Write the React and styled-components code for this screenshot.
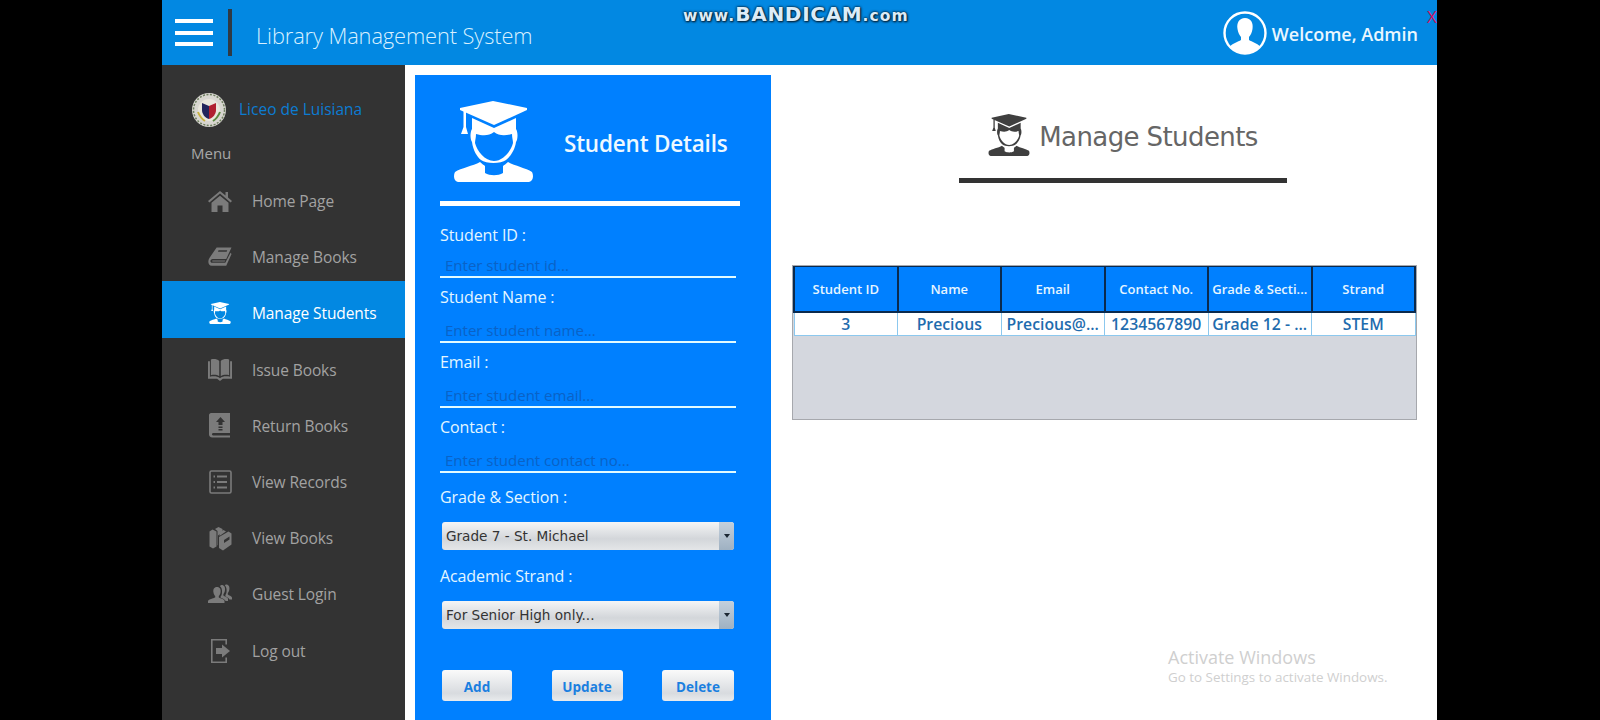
import styled, { createGlobalStyle } from "styled-components";

const GlobalStyle = createGlobalStyle`
  html, body {
    margin: 0;
    padding: 0;
    width: 1600px;
    height: 720px;
    overflow: hidden;
    background: #000;
  }
  * { box-sizing: border-box; }
`;

const uiFont = `"Open Sans", "Noto Sans", sans-serif`;

const Screen = styled.div`
  width: 1600px;
  height: 720px;
  padding-left: 162px;
  background: #000;
  font-family: ${uiFont};
`;

const AppWindow = styled.div`
  position: relative;
  width: 1275px;
  height: 720px;
  display: flex;
  flex-direction: column;
  overflow: hidden;
  background: #fff;
`;

const Header = styled.header`
  height: 65px;
  flex: none;
  display: flex;
  align-items: center;
  background: #0288e2;
  color: #d9f0ff;
`;

const Burger = styled.div`
  width: 38px;
  margin-left: 13px;
  display: flex;
  flex-direction: column;
  gap: 7.5px;
  span {
    display: block;
    height: 4px;
    background: #fff;
  }
`;

const HeaderRule = styled.div`
  width: 4px;
  height: 47px;
  margin-left: 15px;
  background: #2f3a45;
`;

const AppTitle = styled.h1`
  margin: 5px 0 0 24px;
  font-size: 21.8px;
  font-weight: 300;
  letter-spacing: -0.1px;
`;

const Welcome = styled.div`
  margin: 1px 19px 0 auto;
  display: flex;
  align-items: center;
  gap: 5px;
  font-size: 18px;
  font-weight: 600;
  color: #eaf7ff;
  span {
    margin-top: 2px;
  }
`;

const CloseMark = styled.span`
  position: absolute;
  top: 5px;
  left: 1265px;
  font-size: 17px;
  color: #d0125f;
`;

const Watermark = styled.div`
  position: absolute;
  top: 2px;
  left: 521px;
  font-family: "DejaVu Sans", sans-serif;
  font-weight: 700;
  font-size: 15.5px;
  letter-spacing: 1.1px;
  color: #dcecf7;
  text-shadow: 0 0 2px #06263f, 0 0 3px #06263f, 1px 1px 2px #06263f;
  b {
    font-size: 20px;
    letter-spacing: 0.7px;
  }
`;

const Body = styled.div`
  flex: 1;
  min-height: 0;
  display: flex;
`;

const Sidebar = styled.aside`
  width: 243px;
  flex: none;
  padding-top: 28px;
  background: #333;
`;

const Brand = styled.div`
  display: flex;
  align-items: center;
  gap: 13px;
  height: 34px;
  padding-left: 30px;
  font-size: 15.5px;
  line-height: 32px;
  color: #0c7cd2;
  span {
    margin-top: -2px;
  }
`;

const MenuLabel = styled.div`
  margin: 14px 0 0 29px;
  height: 24px;
  line-height: 24px;
  font-size: 15px;
  color: #a8a8a8;
`;

const Nav = styled.nav`
  margin-top: 4px;
`;

const NavRow = styled.div`
  height: 56.2px;
  display: flex;
  align-items: center;
  gap: 20px;
  padding: 8px 0 0 46px;
  font-size: 15.5px;
  letter-spacing: -0.1px;
  background: ${(p) => (p.$active ? "#0288e2" : "transparent")};
  color: ${(p) => (p.$active ? "#fff" : "#a2a2a2")};
  svg {
    color: ${(p) => (p.$active ? "#fff" : "#7b7b7b")};
  }
`;

const NavIcon = styled.span`
  width: 24px;
  height: 24px;
  flex: none;
  display: flex;
  align-items: center;
  justify-content: center;
`;

const DetailsPanel = styled.section`
  width: 356px;
  flex: none;
  margin: 10px 0 0 10px;
  padding: 26px 35px 0 25px;
  background: #0080ff;
  color: #e4f6ff;
`;

const PanelTop = styled.div`
  display: flex;
  align-items: center;
  padding-left: 13px;
  height: 81px;
  color: #fff;
`;

const PanelTitle = styled.h2`
  margin: 4px 0 0 30px;
  font-size: 22.5px;
  font-weight: 600;
  color: #eef9ff;
  letter-spacing: -0.2px;
`;

const PanelRule = styled.div`
  height: 5px;
  margin: 19px -4px 0 0;
  background: #fff;
`;

const Field = styled.div`
  height: ${(p) => (p.$first ? "72px" : "65px")};
  display: flex;
  flex-direction: column;
  justify-content: flex-end;
`;

const FieldLabel = styled.label`
  display: block;
  height: 24px;
  line-height: 24px;
  font-size: 16px;
  letter-spacing: -0.1px;
`;

const TextInput = styled.input`
  display: block;
  width: 296px;
  height: 33px;
  margin-top: ${(p) => (p.$first ? "-2px" : "1px")};
  padding: 8px 5px 0;
  border: 0;
  border-bottom: 2px solid #e2fbff;
  background: transparent;
  outline: none;
  font-family: ${uiFont};
  font-size: 15px;
  &::placeholder {
    color: #0a62c6;
    opacity: 1;
  }
`;

const ComboLabel = styled(FieldLabel)`
  margin-top: ${(p) => p.$top}px;
`;

const Combo = styled.div`
  width: 292px;
  height: 28px;
  margin: 13px 0 0 2px;
  display: flex;
  border-radius: 3px;
  overflow: hidden;
  background: linear-gradient(#f4f5f6, #d3d6da 60%, #e4e6e8);
  color: #333;
  font-family: "DejaVu Sans", sans-serif;
  font-size: 13.6px;
  line-height: 28px;
`;

const ComboText = styled.span`
  flex: 1;
  padding-left: 4px;
`;

const ComboArrow = styled.span`
  width: 15px;
  display: flex;
  align-items: center;
  justify-content: center;
  background: linear-gradient(#c4d0dc, #9fb1c2);
  &::after {
    content: "";
    border-left: 3px solid transparent;
    border-right: 3px solid transparent;
    border-top: 4px solid #1b2733;
  }
`;

const ButtonRow = styled.div`
  width: 292px;
  margin: 41px 0 0 2px;
  display: flex;
  justify-content: space-between;
`;

const ActionButton = styled.button`
  width: ${(p) => p.$width}px;
  height: 31px;
  padding: 3px 0 0;
  border: 0;
  border-radius: 3px;
  background: linear-gradient(#fafafa, #d8dbdf 75%, #e9ebed);
  color: #1a7fe0;
  font-family: ${uiFont};
  font-size: 13.5px;
  font-weight: 700;
`;

const Main = styled.main`
  flex: 1;
  min-width: 0;
  padding: 0 20px 0 21px;
`;

const Heading = styled.div`
  width: 328px;
  height: 118px;
  margin-left: 167px;
  padding-top: 49px;
  border-bottom: 5px solid #333;
  display: flex;
  justify-content: center;
  color: #3f3f3f;
`;

const HeadingText = styled.h2`
  margin: 0 0 0 9px;
  font-family: "DejaVu Sans", sans-serif;
  font-size: 26px;
  line-height: 46px;
  font-weight: 400;
  letter-spacing: -0.6px;
  color: #666;
  white-space: nowrap;
`;

const TableBox = styled.div`
  width: 625px;
  height: 155px;
  margin-top: 82px;
  background: #d4d7de;
  border: 1px solid #a6a8ad;
`;

const Grid = styled.table`
  width: 100%;
  table-layout: fixed;
  border-collapse: collapse;
`;

const HeadCell = styled.th`
  height: 45px;
  padding: 0 2px;
  background: #0080ff;
  border: 2px solid #0a2a4e;
  border-top-width: 1px;
  color: #e6f5ff;
  font-size: 13px;
  font-weight: 600;
  white-space: nowrap;
  overflow: hidden;
`;

const Cell = styled.td`
  height: 24px;
  padding: 0;
  background: #fff;
  border: 1px solid #8cc8ee;
  color: #1f6cae;
  font-size: 15.8px;
  font-weight: 600;
  text-align: center;
  white-space: nowrap;
  overflow: hidden;
`;

const Activate = styled.div`
  position: absolute;
  left: 1006px;
  top: 645px;
  color: #cfcfcf;
  font-size: 13.4px;
  line-height: 16px;
  strong {
    display: block;
    font-size: 18px;
    font-weight: 400;
    line-height: 24px;
  }
`;

const Student = ({ size }) => (
  <svg width={size} height={size} viewBox="0 0 81 81" fill="currentColor">
    <path d="M40 0 L74 7 V9 L41 24 L7 9 V7 Z" />
    <path d="M10.5 10 H13 V26 L15 33 H8 L10.5 26 Z" />
    <path
      fillRule="evenodd"
      d="M19 17 L41 27 L63 17 V28 C65 31 65 38 63 41 C62 49 57 56 53 59 C48 63 33 63 28 59 C24 56 20 49 19 41 C17 38 17 31 19 28 Z M23 33 C30 35 36 35 41 31 C46 35 52 35 59 33 C59 37 60 39 60 42 C58 50 50 60 41 60 C32 60 24 50 22 42 C22 39 23 37 23 33 Z"
    />
    <path d="M27 61 C29 63 31 64 32 65 V72 C37 75 45 75 50 72 V65 C51 64 53 63 55 61 C62 65 73 67 79 71 C81 75 80 80 76 81 H5 C1 80 0 75 2 71 C8 67 20 65 27 61 Z" />
  </svg>
);

const Seal = () => (
  <svg width="34" height="34" viewBox="0 0 34 34">
    <circle cx="17" cy="17" r="17" fill="#d8d6d0" />
    <circle cx="17" cy="17" r="15.5" fill="none" stroke="#6f7f60" strokeWidth="1.5" strokeDasharray="2 1.5" />
    <circle cx="17" cy="17" r="11" fill="#e9e6dc" />
    <path d="M10 10 L17 13 V26 C13 25 10 21 10 17 Z" fill="#22245c" />
    <path d="M24 10 L17 13 V26 C21 25 24 21 24 17 Z" fill="#b02030" />
    <path d="M6 19 C8 24 10 26 13 28" fill="none" stroke="#c8b040" strokeWidth="2" />
    <path d="M28 19 C26 24 24 26 21 28" fill="none" stroke="#5a8a40" strokeWidth="2" />
  </svg>
);

const Home = () => (
  <svg width="24" height="22" viewBox="0 0 24 22" fill="currentColor">
    <path d="M12 1 L17.5 5.5 V2 H20 V7.6 L24 11 L22.6 12.4 L12 3.6 L1.4 12.4 L0 11 Z" />
    <path d="M3.5 12.8 L12 5.8 L20.5 12.8 V22 H14.5 V15.5 H9.5 V22 H3.5 Z" />
  </svg>
);

const TiltedBook = () => (
  <svg width="25" height="22" viewBox="0 0 25 22" fill="currentColor">
    <path d="M9 1 H24.5 L19 13 H5 C2.5 13 1.6 16 3.6 17 H18 L23.5 6.5 L24.5 8 L19 20 H4 C0 20 -0.5 15 1.5 12 Z" />
    <path d="M11 4 H20 L19.5 5.5 H10.4 Z" fill="#333" />
    <path d="M4.5 14.6 H18 L17.4 15.8 H4.5 Z" />
  </svg>
);

const OpenBook = () => (
  <svg width="25" height="24" viewBox="0 0 25 24" fill="currentColor">
    <path d="M3 1 C6 0 9.5 0.5 11.7 2.5 V18.5 C9.5 17 6 16.6 3 17.5 Z" />
    <path d="M22 1 C19 0 15.5 0.5 13.3 2.5 V18.5 C15.5 17 19 16.6 22 17.5 Z" />
    <path d="M0 3 H2 V19 C6 18 10 18.5 12.5 20.5 C15 18.5 19 18 23 19 V3 H25 V21 H15.5 L12.5 23.5 L9.5 21 H0 Z" />
  </svg>
);

const ReturnBook = () => (
  <svg width="22" height="26" viewBox="0 0 22 26" fill="currentColor">
    <path
      fillRule="evenodd"
      d="M2 0 H21 V20 H4 C2.6 20 2.6 22.5 4 22.5 H21 V24.5 H3.5 C1 24.5 0 23 0 21.5 V2 C0 1 1 0 2 0 Z M11.5 4 L7 9 H9.5 V12 H13.5 V9 H16 Z M9.5 13.5 V15 H13.5 V13.5 Z M9.5 16 V17.5 H13.5 V16 Z"
    />
  </svg>
);

const Records = () => (
  <svg width="23" height="24" viewBox="0 0 23 24" fill="none" stroke="currentColor" strokeWidth="1.6">
    <rect x="1" y="1" width="21" height="22" rx="1.5" />
    <path d="M8 6.5 H18 M8 12 H18 M8 17.5 H18 M4.5 6.5 H6 M4.5 12 H6 M4.5 17.5 H6" strokeWidth="1.8" />
  </svg>
);

const Shelf = () => (
  <svg width="23" height="25" viewBox="0 0 23 25" fill="currentColor">
    <path d="M0.5 5.5 L3.5 3.5 L7.5 5.5 V20.5 L4 22.5 L0.5 20.5 Z" />
    <path d="M6 3 L9.5 1 L13.5 3 V6.5 L9 9.5 V19 L8.5 19.5 V5 Z" />
    <path d="M10.5 10 L17 5.5 L14.5 4 L11 6 Z" />
    <path d="M10 11 L19.5 5.5 L22.5 7.5 V18.5 L14 24.5 L10 22 Z" />
    <path d="M15 14 L20.5 10.5 V13.5 L15 17 Z" fill="#333" />
  </svg>
);

const Guests = () => (
  <svg width="24" height="20" viewBox="0 0 24 20" fill="currentColor">
    <path d="M9 3 C12 3 13 5.5 12.6 8 C12.4 10 11.4 11.5 10.8 12 V13.5 C13 14.5 15.5 15 16.5 16.5 V19 H0 V17 C1 15 5 14.5 7.2 13.5 V12 C6.6 11.5 5.6 10 5.4 8 C5 5.5 6 3 9 3 Z" />
    <path d="M13.5 1 C16.5 1 17.3 3.5 17 6 C16.8 8 16 9.5 15.4 10 V11.5 C16.5 12.5 19 13 20 14.5 V17 H17.6 C17 15.5 14.5 14.5 12.6 13.8 V12.6 C13.6 11.4 14 10 14 8 C14.2 5.5 13.6 3.4 12 2.2 C12.4 1.4 13 1 13.5 1 Z" />
    <path d="M18 0.5 C21 0.5 21.7 3 21.4 5 C21.2 7 20.4 8.5 19.8 9 V10.5 C21 11.5 23.4 12 24 13.5 V15.5 H21.4 C21 14 19 13 17.4 12.2 V11 C18.4 10 18.6 8 18.6 6 C18.6 4 18 2.6 16.8 1.2 C17.2 0.8 17.6 0.5 18 0.5 Z" />
  </svg>
);

const LogOut = () => (
  <svg width="21" height="26" viewBox="0 0 21 26" fill="currentColor">
    <path d="M1 1 H17 V6.5 H15.4 V2.6 H2.6 V23.4 H15.4 V19.5 H17 V25 H1 Z" />
    <path d="M6 10 H12 V6.5 L20 13 L12 19.5 V16 H6 Z" />
  </svg>
);

const Avatar = () => (
  <svg width="44" height="44" viewBox="0 0 44 44">
    <circle cx="22" cy="22" r="20.5" fill="none" stroke="#fff" strokeWidth="2.4" />
    <path
      fill="#fff"
      d="M22 7 C28 7 30.5 12 29.5 18 C29 21.5 27.5 24.5 26 26 V29 C29 31 34 32 37 35.5 C33.5 39.5 28 42 22 42 C16 42 10.5 39.5 7 35.5 C10 32 15 31 18 29 V26 C16.5 24.5 15 21.5 14.5 18 C13.5 12 16 7 22 7 Z"
    />
  </svg>
);

const menu = [
  { label: "Home Page", icon: <Home /> },
  { label: "Manage Books", icon: <TiltedBook /> },
  { label: "Manage Students", icon: <Student size={22} />, active: true },
  { label: "Issue Books", icon: <OpenBook /> },
  { label: "Return Books", icon: <ReturnBook /> },
  { label: "View Records", icon: <Records /> },
  { label: "View Books", icon: <Shelf /> },
  { label: "Guest Login", icon: <Guests /> },
  { label: "Log out", icon: <LogOut /> },
];

const fields = [
  { label: "Student ID :", hint: "Enter student id...", first: true },
  { label: "Student Name :", hint: "Enter student name..." },
  { label: "Email :", hint: "Enter student email..." },
  { label: "Contact :", hint: "Enter student contact no..." },
];

const columns = ["Student ID", "Name", "Email", "Contact No.", "Grade & Secti...", "Strand"];
const row = ["3", "Precious", "Precious@...", "1234567890", "Grade 12 - ...", "STEM"];

export default function App() {
  return (
    <Screen>
      <GlobalStyle />
      <AppWindow>
        <Header>
          <Burger>
            <span />
            <span />
            <span />
          </Burger>
          <HeaderRule />
          <AppTitle>Library Management System</AppTitle>
          <Welcome>
            <Avatar />
            <span>Welcome, Admin</span>
          </Welcome>
        </Header>
        <CloseMark>X</CloseMark>
        <Watermark>
          www.<b>BANDICAM</b>.com
        </Watermark>

        <Body>
          <Sidebar>
            <Brand>
              <Seal />
              <span>Liceo de Luisiana</span>
            </Brand>
            <MenuLabel>Menu</MenuLabel>
            <Nav>
              {menu.map((item) => (
                <NavRow key={item.label} $active={item.active}>
                  <NavIcon>{item.icon}</NavIcon>
                  {item.label}
                </NavRow>
              ))}
            </Nav>
          </Sidebar>

          <DetailsPanel>
            <PanelTop>
              <Student size={81} />
              <PanelTitle>Student Details</PanelTitle>
            </PanelTop>
            <PanelRule />
            {fields.map((f) => (
              <Field key={f.label} $first={f.first}>
                <FieldLabel>{f.label}</FieldLabel>
                <TextInput placeholder={f.hint} $first={f.first} />
              </Field>
            ))}
            <ComboLabel $top={12}>Grade &amp; Section :</ComboLabel>
            <Combo>
              <ComboText>Grade 7 - St. Michael</ComboText>
              <ComboArrow />
            </Combo>
            <ComboLabel $top={14}>Academic Strand :</ComboLabel>
            <Combo>
              <ComboText>For Senior High only...</ComboText>
              <ComboArrow />
            </Combo>
            <ButtonRow>
              <ActionButton $width={70}>Add</ActionButton>
              <ActionButton $width={71}>Update</ActionButton>
              <ActionButton $width={72}>Delete</ActionButton>
            </ButtonRow>
          </DetailsPanel>

          <Main>
            <Heading>
              <Student size={42} />
              <HeadingText>Manage Students</HeadingText>
            </Heading>
            <TableBox>
              <Grid>
                <thead>
                  <tr>
                    {columns.map((c) => (
                      <HeadCell key={c}>{c}</HeadCell>
                    ))}
                  </tr>
                </thead>
                <tbody>
                  <tr>
                    {row.map((c) => (
                      <Cell key={c}>{c}</Cell>
                    ))}
                  </tr>
                </tbody>
              </Grid>
            </TableBox>
          </Main>
        </Body>

        <Activate>
          <strong>Activate Windows</strong>
          Go to Settings to activate Windows.
        </Activate>
      </AppWindow>
    </Screen>
  );
}
